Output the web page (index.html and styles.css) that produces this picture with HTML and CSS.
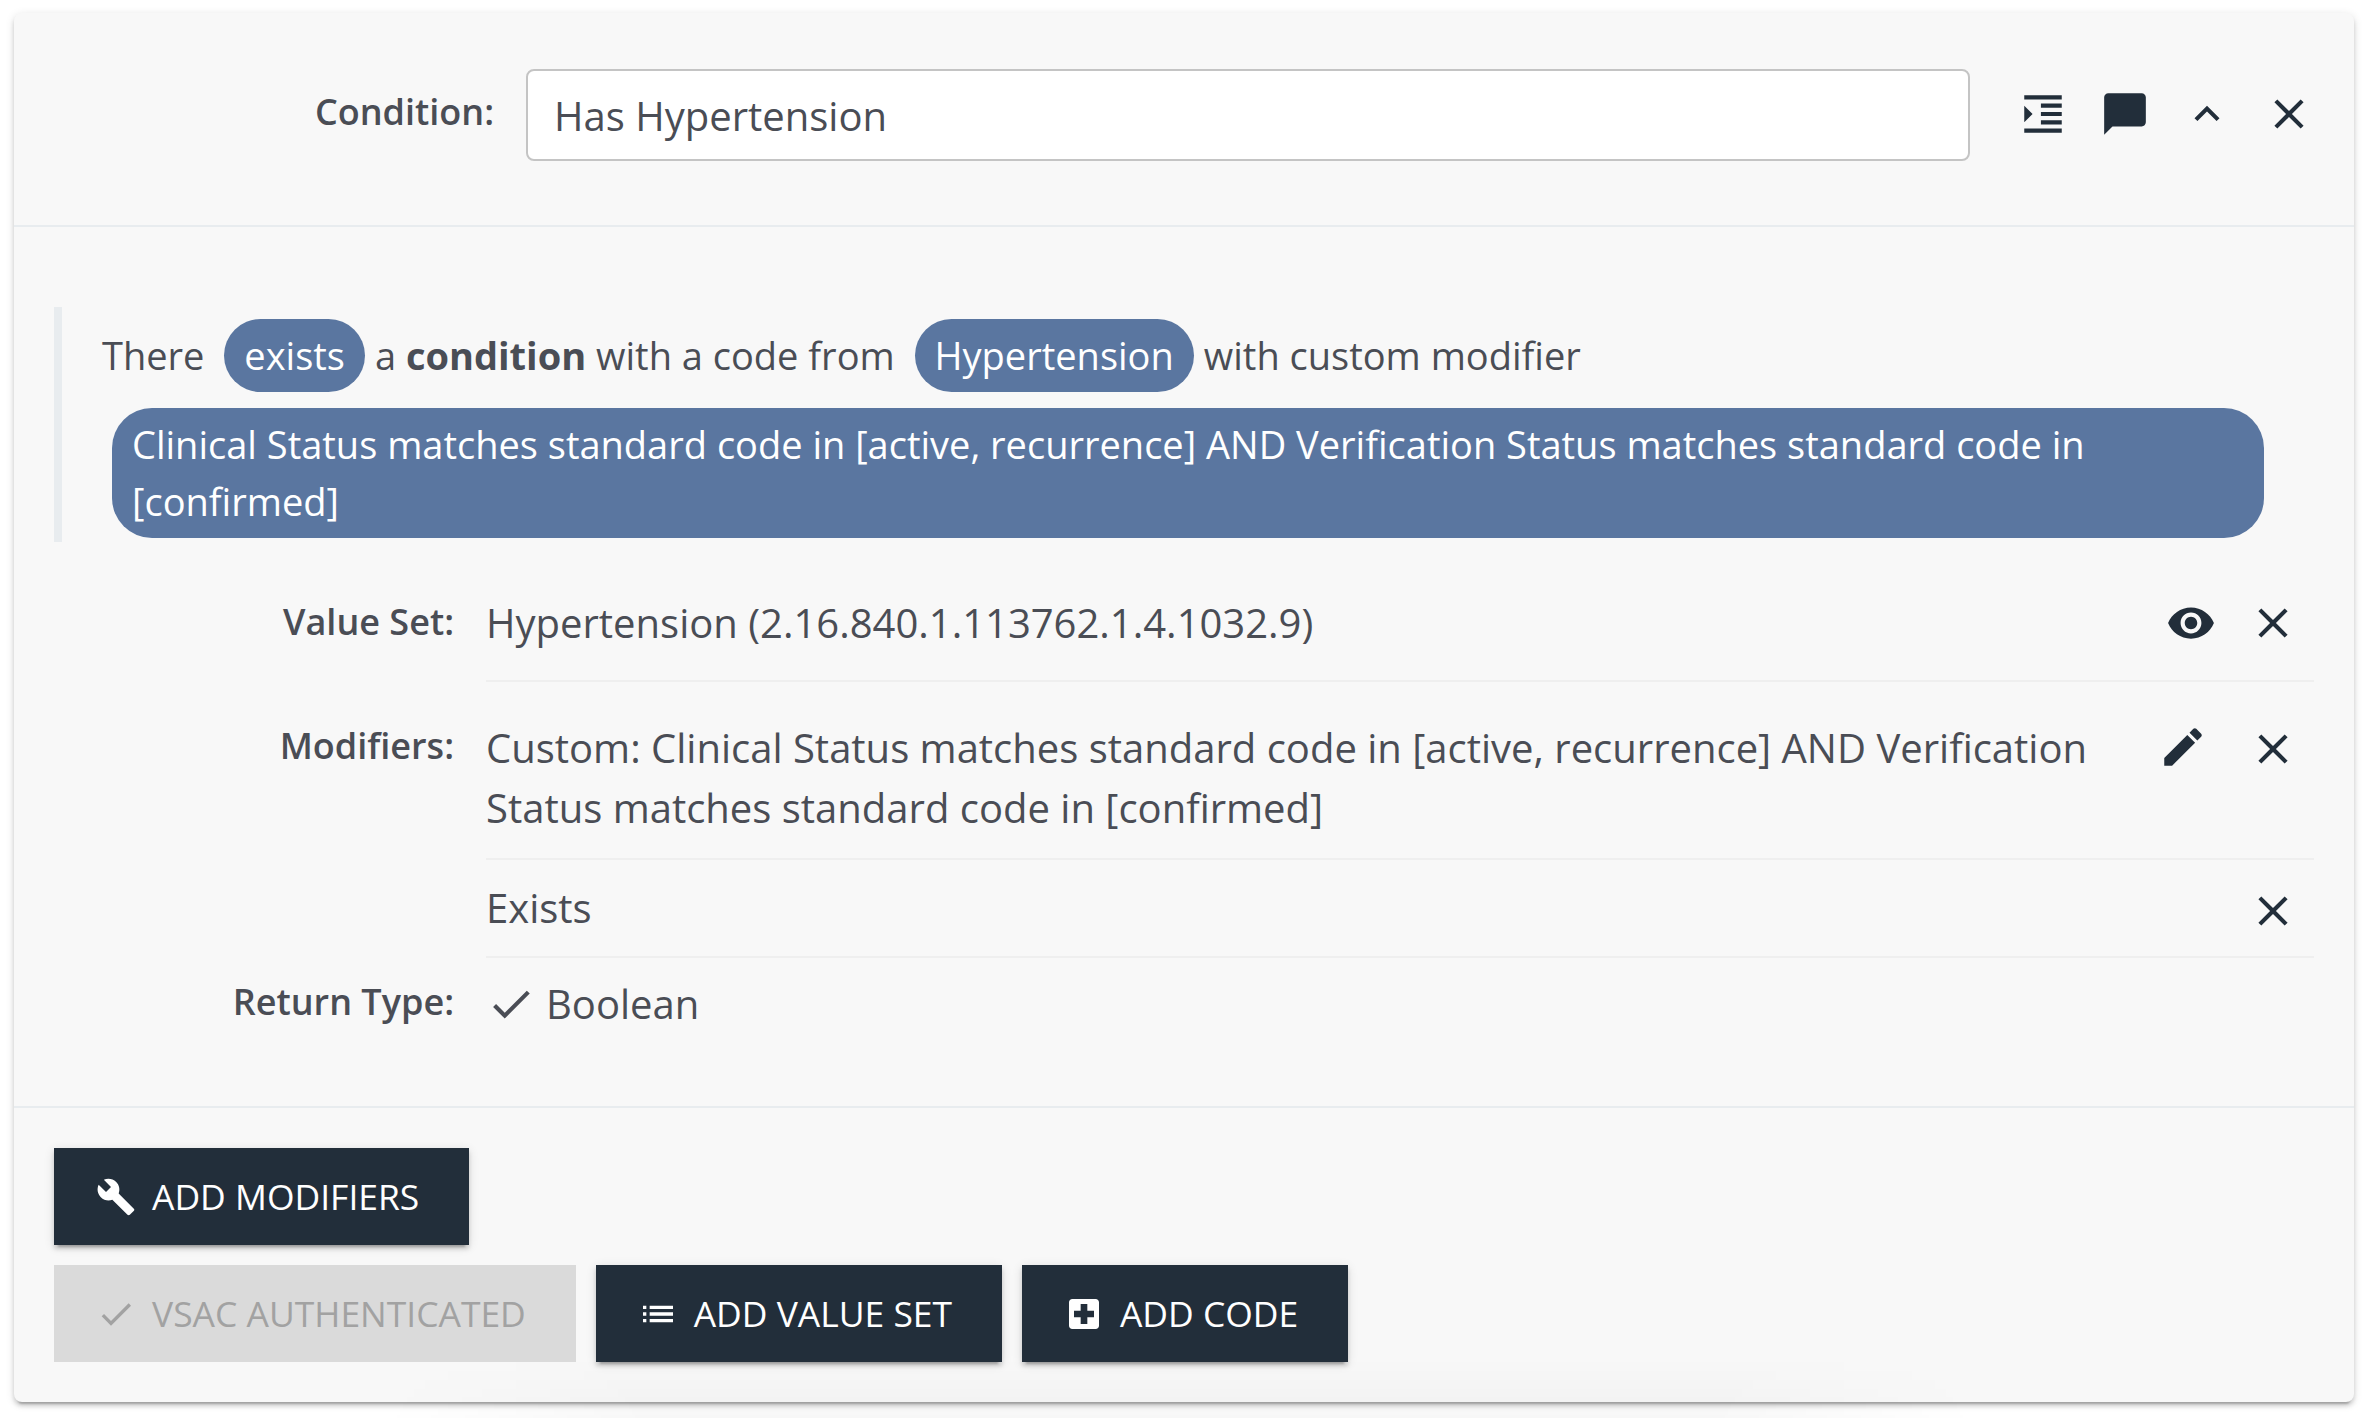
FILE: index.html
```html
<!DOCTYPE html>
<html lang="en">
<head>
<meta charset="utf-8">
<title>Has Hypertension</title>
<link rel="stylesheet" href="styles.css">
</head>
<body>
<svg class="sprite" aria-hidden="true">
  <symbol id="close" viewBox="0 0 24 24"><path d="M19 6.41L17.59 5 12 10.59 6.41 5 5 6.41 10.59 12 5 17.59 6.41 19 12 13.41 17.59 19 19 17.59 13.41 12z"/></symbol>
  <symbol id="check" viewBox="0 0 24 24"><path d="M9 16.17L4.83 12l-1.42 1.41L9 19 21 7l-1.41-1.41z"/></symbol>
</svg>
<main class="card">
  <header class="card-header">
    <label class="label header-label" for="name">Condition:</label>
    <input class="name" id="name" type="text" value="Has Hypertension">
    <div class="header-actions">
      <button class="icon-button" aria-label="Indent"><svg class="icon" viewBox="0 0 24 24"><path d="M3 21h18v-2H3v2zM3 8v8l4-4-4-4zm8 9h10v-2H11v2zM3 3v2h18V3H3zm8 6h10V7H11v2zm0 4h10v-2H11v2z"/></svg></button>
      <button class="icon-button" aria-label="Comment"><svg class="icon" viewBox="0 0 24 24"><path d="M20 2H4c-1.1 0-2 .9-2 2v18l4-4h14c1.1 0 2-.9 2-2V4c0-1.1-.9-2-2-2z"/></svg></button>
      <button class="icon-button" aria-label="Collapse"><svg class="icon" viewBox="0 0 24 24"><path d="M12 8l-6 6 1.41 1.41L12 10.83l4.59 4.58L18 14z"/></svg></button>
      <button class="icon-button" aria-label="Close"><svg class="icon"><use href="#close"/></svg></button>
    </div>
  </header>

  <section class="card-body">
    <div class="phrase">
      <div class="phrase-line">There <span class="pill">exists</span>a <strong>condition</strong> with a code from <span class="pill">Hypertension</span>with custom modifier</div>
      <div class="pill pill-block">Clinical Status matches standard code in [active, recurrence] AND Verification Status matches standard code in [confirmed]</div>
    </div>

    <div class="field">
      <div class="label value-set-label">Value Set:</div>
      <div class="rows">
        <div class="row value-set-row">
          <div class="row-text">Hypertension (2.16.840.1.113762.1.4.1032.9)</div>
          <button class="icon-button" aria-label="View"><svg class="icon" viewBox="0 0 24 24"><path d="M12 4.5C7 4.5 2.73 7.61 1 12c1.73 4.39 6 7.5 11 7.5s9.27-3.11 11-7.5c-1.73-4.39-6-7.5-11-7.5zM12 17c-2.76 0-5-2.24-5-5s2.24-5 5-5 5 2.24 5 5-2.24 5-5 5zm0-8c-1.66 0-3 1.34-3 3s1.34 3 3 3 3-1.34 3-3-1.34-3-3-3z"/></svg></button>
          <button class="icon-button" aria-label="Remove value set"><svg class="icon"><use href="#close"/></svg></button>
        </div>
      </div>
    </div>

    <div class="field">
      <div class="label modifiers-label">Modifiers:</div>
      <div class="rows">
        <div class="row custom-row">
          <div class="row-text">Custom: Clinical Status matches standard code in [active, recurrence] AND Verification Status matches standard code in [confirmed]</div>
          <button class="icon-button edit-button" aria-label="Edit"><svg class="icon" viewBox="0 0 24 24"><path d="M3 17.25V21h3.75L17.81 9.94l-3.75-3.75L3 17.25zM20.71 7.04c.39-.39.39-1.02 0-1.41l-2.34-2.34c-.39-.39-1.02-.39-1.41 0l-1.83 1.83 3.75 3.75 1.83-1.83z"/></svg></button>
          <button class="icon-button" aria-label="Remove modifier"><svg class="icon"><use href="#close"/></svg></button>
        </div>
        <div class="row exists-row">
          <div class="row-text">Exists</div>
          <button class="icon-button" aria-label="Remove modifier"><svg class="icon"><use href="#close"/></svg></button>
        </div>
      </div>
    </div>

    <div class="field">
      <div class="label return-label">Return Type:</div>
      <div class="return-type"><svg class="icon check-icon"><use href="#check"/></svg><span>Boolean</span></div>
    </div>
  </section>

  <footer class="card-footer">
    <div class="buttons">
      <button class="button"><svg class="button-icon" viewBox="0 0 24 24"><path d="M22.7 19l-9.1-9.1c.9-2.3.4-5-1.5-6.9-2-2-5-2.4-7.4-1.3L9 6 6 9 1.6 4.7C.4 7.1.9 10.1 2.9 12.1c1.9 1.9 4.6 2.4 6.9 1.5l9.1 9.1c.4.4 1 .4 1.4 0l2.3-2.3c.5-.4.5-1.1.1-1.4z"/></svg><span class="button-label">ADD MODIFIERS</span></button>
    </div>
    <div class="buttons">
      <button class="button" disabled><svg class="button-icon"><use href="#check"/></svg><span class="button-label">VSAC AUTHENTICATED</span></button>
      <button class="button"><svg class="button-icon" viewBox="0 0 24 24"><path d="M3 13h2v-2H3v2zm0 4h2v-2H3v2zm0-8h2V7H3v2zm4 4h14v-2H7v2zm0 4h14v-2H7v2zM7 7v2h14V7H7z"/></svg><span class="button-label">ADD VALUE SET</span></button>
      <button class="button"><svg class="button-icon" viewBox="0 0 24 24"><path d="M19 3H5c-1.1 0-1.99.9-1.99 2L3 19c0 1.1.9 2 2 2h14c1.1 0 2-.9 2-2V5c0-1.1-.9-2-2-2zm-1 11h-4v4h-4v-4H6v-4h4V6h4v4h4v4z"/></svg><span class="button-label">ADD CODE</span></button>
    </div>
  </footer>
</main>
</body>
</html>
```
FILE: styles.css
```css
* { box-sizing: border-box; }

html { overflow: hidden; }

body {
  margin: 0;
  padding: 13px 16px 16px 14px;
  height: 1418px;
  background: #fff;
  color: #4a4d55;
  font: 400 40px/60px "Open Sans", "Noto Sans", sans-serif;
  position: relative;
}

body::after {
  content: "";
  position: absolute;
  left: 380px;
  bottom: 0;
  width: 1600px;
  height: 60px;
  background: linear-gradient(to top, rgba(0, 0, 0, .03), rgba(0, 0, 0, .016) 40%, transparent);
  mask-image: linear-gradient(to right, transparent, #000 17%, #000 83%, transparent);
  pointer-events: none;
}

.sprite { position: absolute; width: 0; height: 0; }

button, input { font: inherit; color: inherit; }

.card {
  height: 1389px;
  background: #f8f8f8;
  border-radius: 8px;
  box-shadow: 0 6px 2px -4px rgba(0, 0, 0, .2), 0 4px 4px rgba(0, 0, 0, .14), 0 2px 10px rgba(0, 0, 0, .12);
}

.card-header {
  display: flex;
  height: 214px;
  padding: 56px 24px 0 40px;
  border-bottom: 2px solid #e8ecef;
}

.label {
  flex: none;
  width: 400px;
  margin-right: 32px;
  font-size: 36px;
  line-height: 56px;
  font-weight: 600;
  text-align: right;
}

.header-label { width: 440px; padding-top: 15px; }

.name {
  flex: 1;
  height: 92px;
  padding: 0 26px;
  border: 2px solid #c4c4c4;
  border-radius: 8px;
  background: #fff;
}

.header-actions { display: flex; margin: 4px 0 0 32px; }

.icon-button {
  flex: none;
  width: 82px;
  height: 82px;
  padding: 16px;
  border: 0;
  background: none;
  color: #222e3a;
}

.icon {
  display: block;
  width: 50px;
  height: 50px;
  fill: currentColor;
}

.card-body {
  height: 881px;
  padding: 80px 40px 0;
  border-bottom: 2px solid #e8ecef;
}

.phrase {
  display: flex;
  flex-direction: column;
  gap: 16px;
  height: 235px;
  margin-bottom: 22px;
  padding: 12px 40px 4px;
  border-left: 8px solid #e8ecef;
  font-size: 38px;
  line-height: 57px;
}

.phrase-line { height: 73px; line-height: 73px; }

.phrase strong { font-weight: 700; }

.pill {
  display: inline-block;
  margin: 0 10px;
  padding: 8px 20px;
  border-radius: 40px;
  background: #5a76a0;
  color: #fff;
  line-height: 57px;
}

.pill-block { display: block; }

.field { display: flex; }

.rows { flex: 1; }

.row {
  display: flex;
  border-bottom: 2px solid #efefef;
}

.row-text { flex: 1; }

.value-set-label { padding-top: 30px; }
.value-set-row { height: 118px; padding-top: 18px; }
.value-set-row .row-text { padding-top: 11px; }

.modifiers-label { padding-top: 36px; }
.custom-row { height: 178px; padding-top: 26px; }
.custom-row .row-text { padding-top: 10px; }
.edit-button { margin: -2px 8px 0 0; }

.exists-row { height: 98px; padding-top: 10px; }
.exists-row .row-text { padding-top: 8px; }

.return-label { padding-top: 16px; }

.return-type {
  display: flex;
  gap: 10px;
  padding-top: 16px;
}

.check-icon { margin-top: 5px; }

.card-footer { padding: 40px; }

.buttons { display: flex; gap: 20px; }
.buttons + .buttons { margin-top: 20px; }

.button {
  display: flex;
  align-items: center;
  height: 97px;
  padding: 0 49.8px 0 42px;
  border: 0;
  background: #222e3a;
  color: #fff;
  font-size: 35.45px;
  line-height: 62px;
  white-space: nowrap;
  box-shadow: 0 6px 2px -4px rgba(0, 0, 0, .2), 0 4px 4px rgba(0, 0, 0, .14), 0 2px 10px rgba(0, 0, 0, .12);
}

.button:disabled {
  background: #dadada;
  color: #a2a2a2;
  box-shadow: none;
}

.button-label { padding-bottom: 2px; }

.button-icon {
  width: 40px;
  height: 40px;
  margin-right: 16px;
  fill: currentColor;
}
```
